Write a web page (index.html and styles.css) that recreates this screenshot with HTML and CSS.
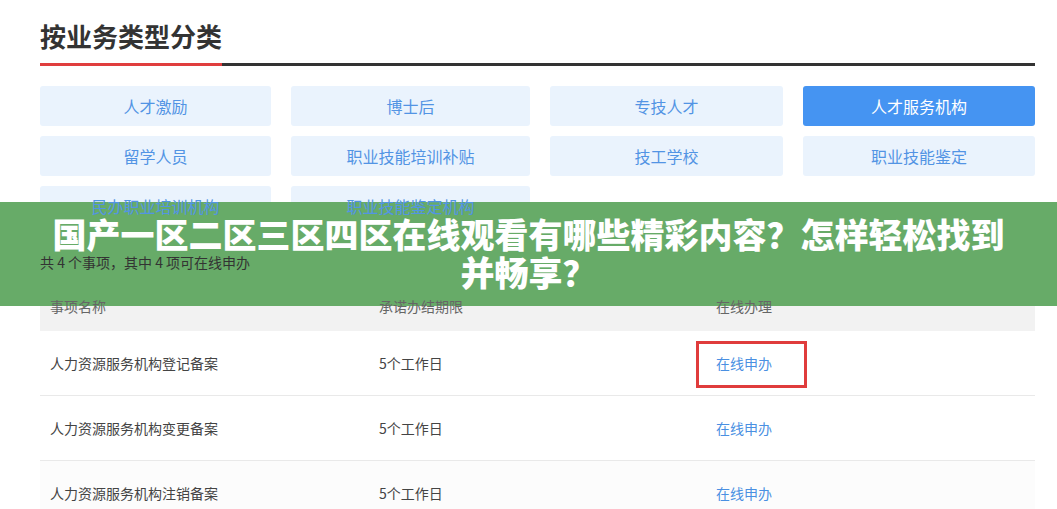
FILE: index.html
```html
<!DOCTYPE html>
<html lang="zh-CN">
<head>
  <meta charset="UTF-8">
  <title>按业务类型分类</title>
  <link rel="stylesheet" href="styles.css">
</head>
<body>
  <div class="page">
    <div class="title-bar">
      <h2 class="title">按业务类型分类</h2>
    </div>

    <div class="types">
      <a class="type"><span>人才激励</span></a>
      <a class="type"><span>博士后</span></a>
      <a class="type"><span>专技人才</span></a>
      <a class="type active"><span>人才服务机构</span></a>
      <a class="type"><span>留学人员</span></a>
      <a class="type"><span>职业技能培训补贴</span></a>
      <a class="type"><span>技工学校</span></a>
      <a class="type"><span>职业技能鉴定</span></a>
      <a class="type"><span>民办职业培训机构</span></a>
      <a class="type"><span>职业技能鉴定机构</span></a>
    </div>

    <p class="summary"><span>共 4 个事项，其中 4 项可在线申办</span></p>

    <div class="table">
      <div class="row head">
        <div class="cell"><span>事项名称</span></div>
        <div class="cell"><span>承诺办结期限</span></div>
        <div class="cell"><span>在线办理</span></div>
      </div>
      <div class="row">
        <div class="cell">人力资源服务机构登记备案</div>
        <div class="cell">5个工作日</div>
        <div class="cell"><a class="apply marked">在线申办</a></div>
      </div>
      <div class="row">
        <div class="cell">人力资源服务机构变更备案</div>
        <div class="cell">5个工作日</div>
        <div class="cell"><a class="apply">在线申办</a></div>
      </div>
      <div class="row shade">
        <div class="cell">人力资源服务机构注销备案</div>
        <div class="cell">5个工作日</div>
        <div class="cell"><a class="apply">在线申办</a></div>
      </div>
    </div>
  </div>

  <div class="banner">国产一区二区三区四区在线观看有哪些精彩内容？怎样轻松找到并畅享？</div>
</body>
</html>
```

FILE: styles.css
```css
body {
  margin: 0;
  background: #fff;
  font-family: "Noto Sans CJK SC", "Noto Sans", sans-serif;
  color: #333;
  overflow: hidden;
}
.page {
  padding: 0 22px 0 40px;
}
.title-bar {
  padding-top: 18px;
  border-bottom: 3px solid #333;
  margin-bottom: 20px;
}
.title {
  display: inline-block;
  margin: 0 0 -3px 0;
  padding-bottom: 9px;
  font-size: 26px;
  line-height: 36px;
  font-weight: bold;
  color: #333;
  border-bottom: 3px solid #e03e3e;
}
.types {
  display: grid;
  grid-template-columns: 231px 239px 233px 1fr;
  grid-auto-rows: 40px;
  gap: 10px 20px;
}
.type {
  display: flex;
  align-items: center;
  justify-content: center;
  background: #eaf3fd;
  border-radius: 3px;
  color: #5294e4;
  font-size: 16px;
}
.type span {
  position: relative;
  z-index: 2;
}
.type.active {
  background: #4594f2;
  color: #fff;
}
.summary {
  margin: 26px 0 0 0;
  font-size: 14px;
  line-height: 20px;
  color: #333;
}
.summary span {
  position: relative;
  z-index: 2;
}
.table {
  margin-top: 15px;
}
.row {
  display: grid;
  grid-template-columns: 329px 337px 1fr;
  height: 64px;
  align-items: center;
  border-bottom: 1px solid #e9e9e9;
  font-size: 14px;
  color: #444;
}
.row.head {
  height: 44px;
  box-sizing: border-box;
  padding-bottom: 6px;
  background: #f2f2f2;
  border-bottom: none;
  color: #666;
}
.row.head span {
  position: relative;
  z-index: 2;
}
.row.shade {
  background: #fcfcfc;
}
.cell {
  padding-left: 10px;
}
.apply {
  position: relative;
  color: #4a90e2;
}
.apply.marked::after {
  content: "";
  position: absolute;
  left: -20px;
  top: -12px;
  width: 111px;
  height: 47px;
  box-sizing: border-box;
  border: 3px solid #e03c3c;
}
.banner {
  position: absolute;
  z-index: 1;
  left: 0;
  right: 0;
  top: 202px;
  height: 104px;
  box-sizing: border-box;
  padding: 13px 45px 0 45px;
  background: #67ab68;
  color: #fff;
  font-size: 34px;
  line-height: 38px;
  font-weight: 900;
  text-align: center;
}
```
